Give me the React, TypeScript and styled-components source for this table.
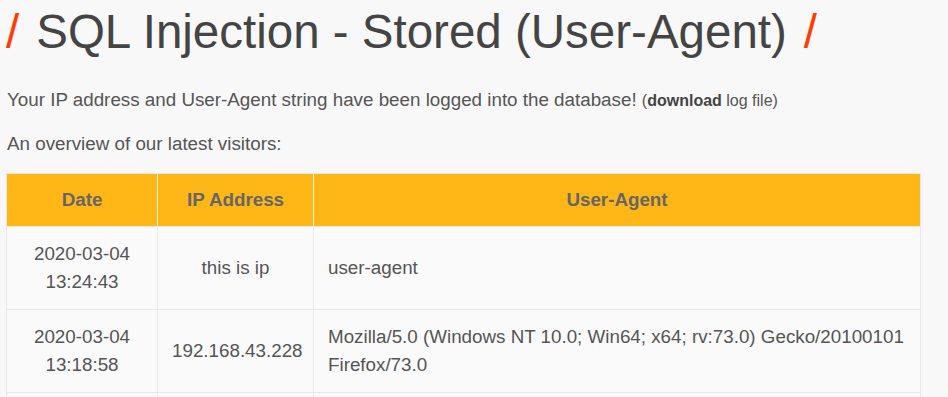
import styled, { createGlobalStyle } from "styled-components";

type Visit = {
  date: string;
  time: string;
  ip: string;
  agent: string;
};

const visits: Visit[] = [
  { date: "2020-03-04", time: "13:24:43", ip: "this is ip", agent: "user-agent" },
  {
    date: "2020-03-04",
    time: "13:18:58",
    ip: "192.168.43.228",
    agent: "Mozilla/5.0 (Windows NT 10.0; Win64; x64; rv:73.0) Gecko/20100101 Firefox/73.0",
  },
  { date: "2020-03-04", time: "13:10:12", ip: "192.168.43.228", agent: "sqlmap/1.4" },
];

const GlobalStyle = createGlobalStyle`
  html, body {
    margin: 0;
    background: #f8f8f8;
    overflow: hidden;
  }
  body {
    font-family: "Liberation Sans", Arial, sans-serif;
    color: #555;
  }
`;

const Page = styled.div`
  padding: 0 27px 0 6px;
`;

const Title = styled.h1`
  margin: 0;
  height: 63px;
  font-size: 47.5px;
  font-weight: 400;
  color: #444;
  display: flex;
  align-items: center;
  gap: 17px;
`;

const Slash = styled.span`
  color: #ff3d00;
`;

const Text = styled.p<{ $top: number }>`
  margin: 0;
  font-size: 18.8px;
  line-height: 22px;
  padding-top: ${(p) => p.$top}px;
  padding-left: 1px;
`;

const Small = styled.span`
  font-size: 16px;
  color: #555;
  b {
    color: #444;
  }
`;

const Table = styled.table`
  margin-top: 18px;
  width: 915px;
  border-collapse: collapse;
  font-size: 18.8px;
  table-layout: fixed;
`;

const Head = styled.th`
  background: #ffb617;
  color: #666;
  font-weight: 700;
  height: 52px;
  padding: 0 12px;
  border: 1px solid #e8e8e8;
  border-left-color: #fff3d6;
  border-right-color: #fff3d6;
  &:first-child {
    border-left-color: #e8e8e8;
  }
  &:last-child {
    border-right-color: #e8e8e8;
  }
`;

const Cell = styled.td<{ $left?: boolean }>`
  border: 1px solid #e8e8e8;
  padding: ${(p) => (p.$left ? "13px 8px 13px 14px" : "13px 14px")};
  line-height: 28px;
  text-align: ${(p) => (p.$left ? "left" : "center")};
  background: #fafafa;
`;

export default function App() {
  return (
    <>
      <GlobalStyle />
      <Page>
        <Title>
          <Slash>/</Slash>
          <span>SQL Injection - Stored (User-Agent)</span>
          <Slash>/</Slash>
        </Title>
        <Text $top={26}>
          Your IP address and User-Agent string have been logged into the database!{" "}
          <Small>
            (<b>download</b> log file)
          </Small>
        </Text>
        <Text $top={21}>An overview of our latest visitors:</Text>
        <Table>
          <colgroup>
            <col style={{ width: 151 }} />
            <col style={{ width: 156 }} />
            <col />
          </colgroup>
          <thead>
            <tr>
              <Head>Date</Head>
              <Head>IP Address</Head>
              <Head>User-Agent</Head>
            </tr>
          </thead>
          <tbody>
            {visits.map((v, i) => (
              <tr key={i}>
                <Cell>
                  {v.date}
                  <br />
                  {v.time}
                </Cell>
                <Cell>{v.ip}</Cell>
                <Cell $left>{v.agent}</Cell>
              </tr>
            ))}
          </tbody>
        </Table>
      </Page>
    </>
  );
}
